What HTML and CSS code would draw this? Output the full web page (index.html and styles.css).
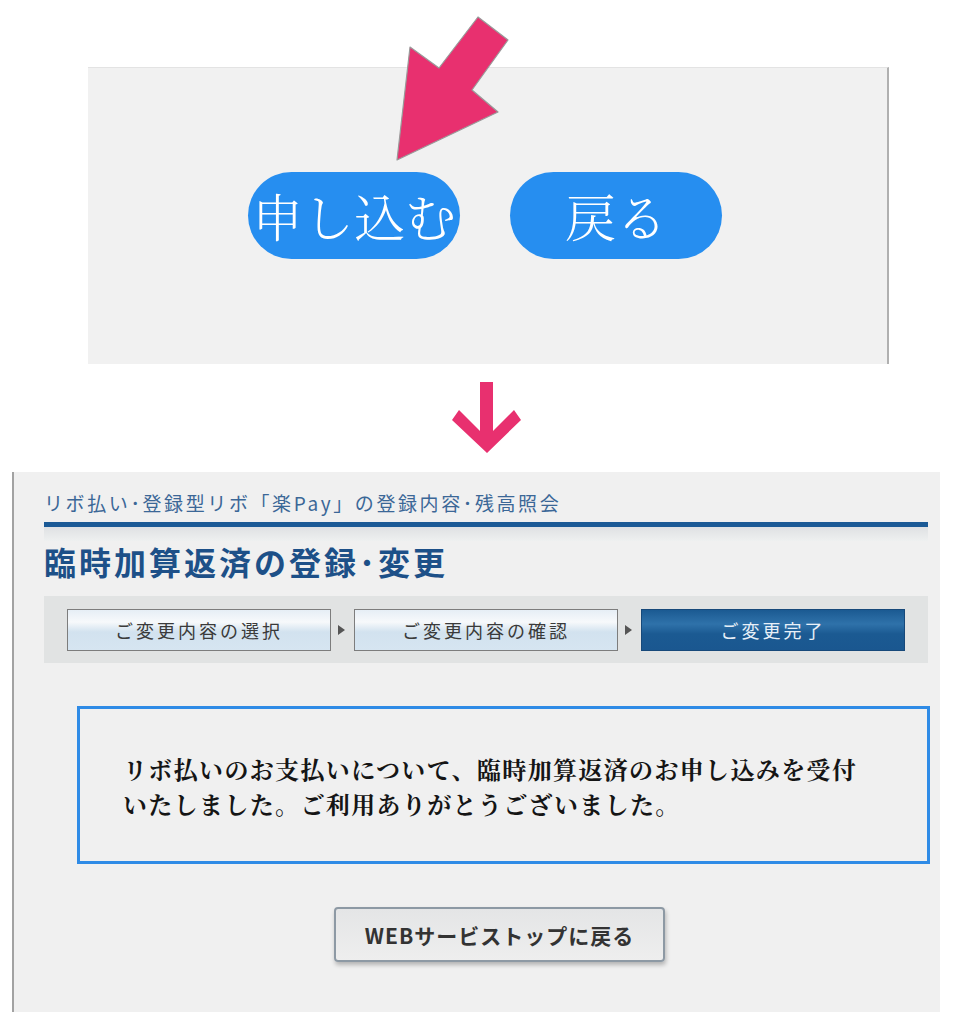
FILE: index.html
```html
<!DOCTYPE html>
<html lang="ja">
<head>
    <meta charset="UTF-8">
    <meta name="viewport" content="width=device-width, initial-scale=1.0">
    <title>臨時加算返済の登録・変更</title>
    <link rel="stylesheet" href="styles.css">
</head>
<body>
    <div class="stage">
        <!-- 上段：申し込みボタンのキャプチャ -->
        <div class="top-wrap">
            <div class="top-panel">
                <div class="btn-row">
                    <button class="pill-btn">申し込む</button>
                    <button class="pill-btn">戻る</button>
                </div>
            </div>
        </div>

        <svg class="pointer" width="976" height="170" viewBox="0 0 976 170">
            <polygon points="478,17 508,40 472,90 498,112 397,160 410,47 439,68" fill="#e8306f" stroke="#9a9a9a" stroke-width="1.2" stroke-linejoin="round"/>
        </svg>

        <!-- 下向き矢印 -->
        <div class="down-arrow">
            <svg width="70" height="72" viewBox="452 382 70 72">
                <polygon points="480,382 493,382 493,431 514,410 521,420 487,453 452,420 459,410 480,431" fill="#e8306f"/>
            </svg>
        </div>

        <!-- 下段：完了画面 -->
        <div class="result-panel">
            <p class="crumb">リボ払い･登録型リボ「楽Pay」の登録内容･残高照会</p>
            <div class="crumb-rule"></div>
            <div class="crumb-shade"></div>
            <h1 class="page-title">臨時加算返済の登録･変更</h1>

            <div class="steps">
                <div class="step">ご変更内容の選択</div>
                <span class="step-arrow"></span>
                <div class="step">ご変更内容の確認</div>
                <span class="step-arrow"></span>
                <div class="step current">ご変更完了</div>
            </div>

            <div class="message">
                <p>リボ払いのお支払いについて、臨時加算返済のお申し込みを受付<br>いたしました。ご利用ありがとうございました。</p>
            </div>

            <div class="back-row">
                <button class="top-btn">WEBサービストップに戻る</button>
            </div>
        </div>
    </div>
</body>
</html>
```

FILE: styles.css
```css
/* 全体 */
body {
    margin: 0;
    padding: 0;
    background: #fff;
    font-family: "Noto Sans CJK JP", "Noto Sans", sans-serif;
    color: #333;
}

.stage {
    position: relative;
    width: 976px;
    height: 1024px;
    overflow: hidden;
}

/* 上段 */
.top-wrap {
    padding: 67px 0 0 88px;
}

.top-panel {
    width: 799px;
    height: 296px;
    background: #f1f1f1;
    border-top: 1px solid #e3e3e3;
    border-right: 2px solid #b0b0b0;
}

.btn-row {
    display: flex;
    gap: 50px;
    padding: 104px 0 0 160px;
}

.pill-btn {
    width: 212px;
    height: 87px;
    border: none;
    border-radius: 44px;
    background: #268ef0;
    color: #fff;
    font-family: "Noto Serif CJK JP", "Liberation Serif", "Noto Sans CJK JP", serif;
    font-size: 51px;
    font-weight: 300;
    padding: 0;
    line-height: 1;
}

.pointer {
    position: absolute;
    left: 0;
    top: 0;
}

/* 矢印 */
.down-arrow {
    box-sizing: border-box;
    height: 108px;
    padding: 18px 0 0 452px;
}

.down-arrow svg {
    display: block;
}

/* 下段 */
.result-panel {
    margin-left: 12px;
    width: 896px;
    height: 520px;
    padding: 20px 0 0 30px;
    background: #f0f0f0;
    border-left: 2px solid #a2a2a2;
}

.crumb {
    margin: 0;
    font-size: 19px;
    line-height: 22px;
    color: #3b6797;
    letter-spacing: 2.6px;
}

.crumb-rule {
    margin-top: 8px;
    width: 884px;
    height: 5px;
    background: #1b5a96;
}

.crumb-shade {
    width: 884px;
    height: 14px;
    background: linear-gradient(#dfe1e3, #eef0f0);
}

.page-title {
    margin: 0;
    font-size: 32px;
    line-height: 40px;
    font-weight: bold;
    color: #1d5088;
    letter-spacing: 3px;
}

/* ステップ */
.steps {
    display: flex;
    align-items: center;
    width: 839px;
    height: 67px;
    margin-top: 15px;
    padding: 0 22px 0 23px;
    background: #e1e3e3;
}

.step {
    box-sizing: border-box;
    width: 264px;
    height: 42px;
    border: 1px solid #7d7d7d;
    background: linear-gradient(#e6eef5 0%, #f7f9fb 30%, #d2e2ef 55%, #d6e5f1 100%);
    color: #3a3a3a;
    font-size: 18px;
    line-height: 40px;
    text-align: center;
    letter-spacing: 3px;
}

.step.current {
    border-color: #17497a;
    background: linear-gradient(#1b5a92 0%, #2f72aa 35%, #1b5a92 60%, #1a5790 100%);
    color: #e8f0f8;
}

.step-arrow {
    width: 0;
    height: 0;
    margin: 0 9px 0 7px;
    border-top: 5px solid transparent;
    border-bottom: 5px solid transparent;
    border-left: 7px solid #555;
}

/* メッセージ */
.message {
    box-sizing: border-box;
    width: 853px;
    height: 158px;
    margin: 43px 0 0 33px;
    padding: 42px 0 0 43px;
    border: 3px solid #2f8be6;
}

.message p {
    margin: 0;
    font-family: "Noto Serif CJK JP", "Liberation Serif", "Noto Sans CJK JP", serif;
    font-size: 24px;
    line-height: 35px;
    font-weight: bold;
    color: #151515;
    letter-spacing: 1.35px;
}

/* 戻るボタン */
.back-row {
    padding: 43px 0 0 290px;
}

.top-btn {
    width: 331px;
    height: 55px;
    border: 2px solid #8d99a4;
    border-radius: 4px;
    background: linear-gradient(#e4e5e6, #eeeeee);
    box-shadow: 1px 3px 4px rgba(0, 0, 0, 0.25);
    font-family: "Noto Sans CJK JP", sans-serif;
    font-size: 21px;
    font-weight: bold;
    color: #333;
    letter-spacing: 1px;
    padding: 0;
}
```
